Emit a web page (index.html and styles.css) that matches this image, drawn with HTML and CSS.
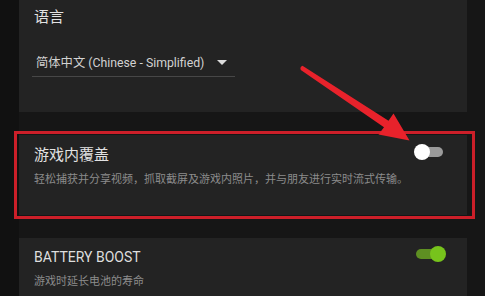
FILE: index.html
```html
<!DOCTYPE html>
<html lang="zh-CN">
<head>
<meta charset="utf-8">
<title>设置</title>
<link rel="stylesheet" href="styles.css">
</head>
<body>
<div class="page">
  <section class="panel panel-lang">
    <div class="title">语言</div>
    <div class="dropdown">
      <span class="dropdown-text">简体中文 (Chinese - Simplified)</span>
      <span class="caret"></span>
    </div>
  </section>

  <div class="highlight">
    <section class="panel panel-setting">
      <div class="row">
        <div class="title">游戏内覆盖</div>
        <div class="toggle off"><span class="track"></span><span class="knob"></span></div>
      </div>
      <div class="desc">轻松捕获并分享视频，抓取截屏及游戏内照片，并与朋友进行实时流式传输。</div>
    </section>
  </div>

  <section class="panel panel-setting panel-battery">
    <div class="row">
      <div class="title title-latin">BATTERY BOOST</div>
      <div class="toggle on"><span class="track"></span><span class="knob"></span></div>
    </div>
    <div class="desc">游戏时延长电池的寿命</div>
  </section>

  <svg class="arrow" width="485" height="296" viewBox="0 0 485 296">
    <path d="M302.5 65.8 L388.5 120.8 L393.5 113.5 L409.5 140.5 L378.5 134.5 L384 127.3 L300.8 70 Q299.5 67 302.5 65.8 Z" fill="#e8222b"/>
  </svg>
</div>
</body>
</html>
```

FILE: styles.css
```css
html, body {
  margin: 0;
  padding: 0;
  background: #151515;
}

.page {
  position: relative;
  width: 485px;
  height: 296px;
  overflow: hidden;
  display: flex;
  flex-direction: column;
  align-items: flex-start;
  font-family: Roboto, "Noto Sans CJK SC", sans-serif;
  background: linear-gradient(to right, #111111 0, #111111 19px, #161616 19px);
}

.page > * {
  flex-shrink: 0;
}

.panel {
  box-sizing: border-box;
  width: 448px;
  margin-left: 19px;
  background: #232323;
  padding: 0 21px 0 15px;
}

.panel-lang {
  height: 112px;
  padding-top: 7px;
}

.title {
  color: #e2e2e2;
  font-size: 15px;
  line-height: 20px;
}

.title-latin {
  font-size: 14px;
  color: #dedede;
}

.dropdown {
  box-sizing: border-box;
  width: 203px;
  margin-left: -2px;
  margin-top: 27px;
  padding: 0 8px 4px 4px;
  border-bottom: 1px solid #474747;
  display: flex;
  align-items: center;
  justify-content: space-between;
}

.dropdown-text {
  color: #d2d2d2;
  font-size: 12.3px;
  line-height: 18px;
}

.caret {
  width: 0;
  height: 0;
  border-left: 5px solid transparent;
  border-right: 5px solid transparent;
  border-top: 5px solid #dcdcdc;
  margin-top: -1px;
}

.highlight {
  margin-top: 19px;
  margin-left: 14px;
  border: 3px solid #cc1f29;
  padding: 1px 5px 1px 2px;
}

.highlight .panel {
  margin-left: 0;
}

.panel-setting {
  height: 80px;
  padding-top: 10px;
}

.panel-battery {
  margin-top: 19px;
  padding-top: 9px;
  height: 70px;
}

.row {
  display: flex;
  justify-content: space-between;
  align-items: flex-start;
}

.desc {
  margin-top: 7px;
  color: #8c8c8c;
  font-size: 11px;
  line-height: 16px;
}

.toggle {
  position: relative;
  width: 32px;
  height: 16px;
  margin-top: -1px;
}

.toggle .track {
  position: absolute;
  top: 3px;
  height: 10px;
  border-radius: 5px;
}

.toggle .knob {
  position: absolute;
  top: 0;
  width: 16px;
  height: 16px;
  border-radius: 50%;
}

.toggle.off .track {
  left: 4px;
  width: 25px;
  background: #9b9b9b;
}

.toggle.off .knob {
  left: 0;
  background: #ffffff;
}

.toggle.on .track {
  left: 2px;
  width: 24px;
  background: #5e8f22;
}

.toggle.on .knob {
  left: 16px;
  background: #77c31c;
}

.arrow {
  position: absolute;
  left: 0;
  top: 0;
  pointer-events: none;
}
```
